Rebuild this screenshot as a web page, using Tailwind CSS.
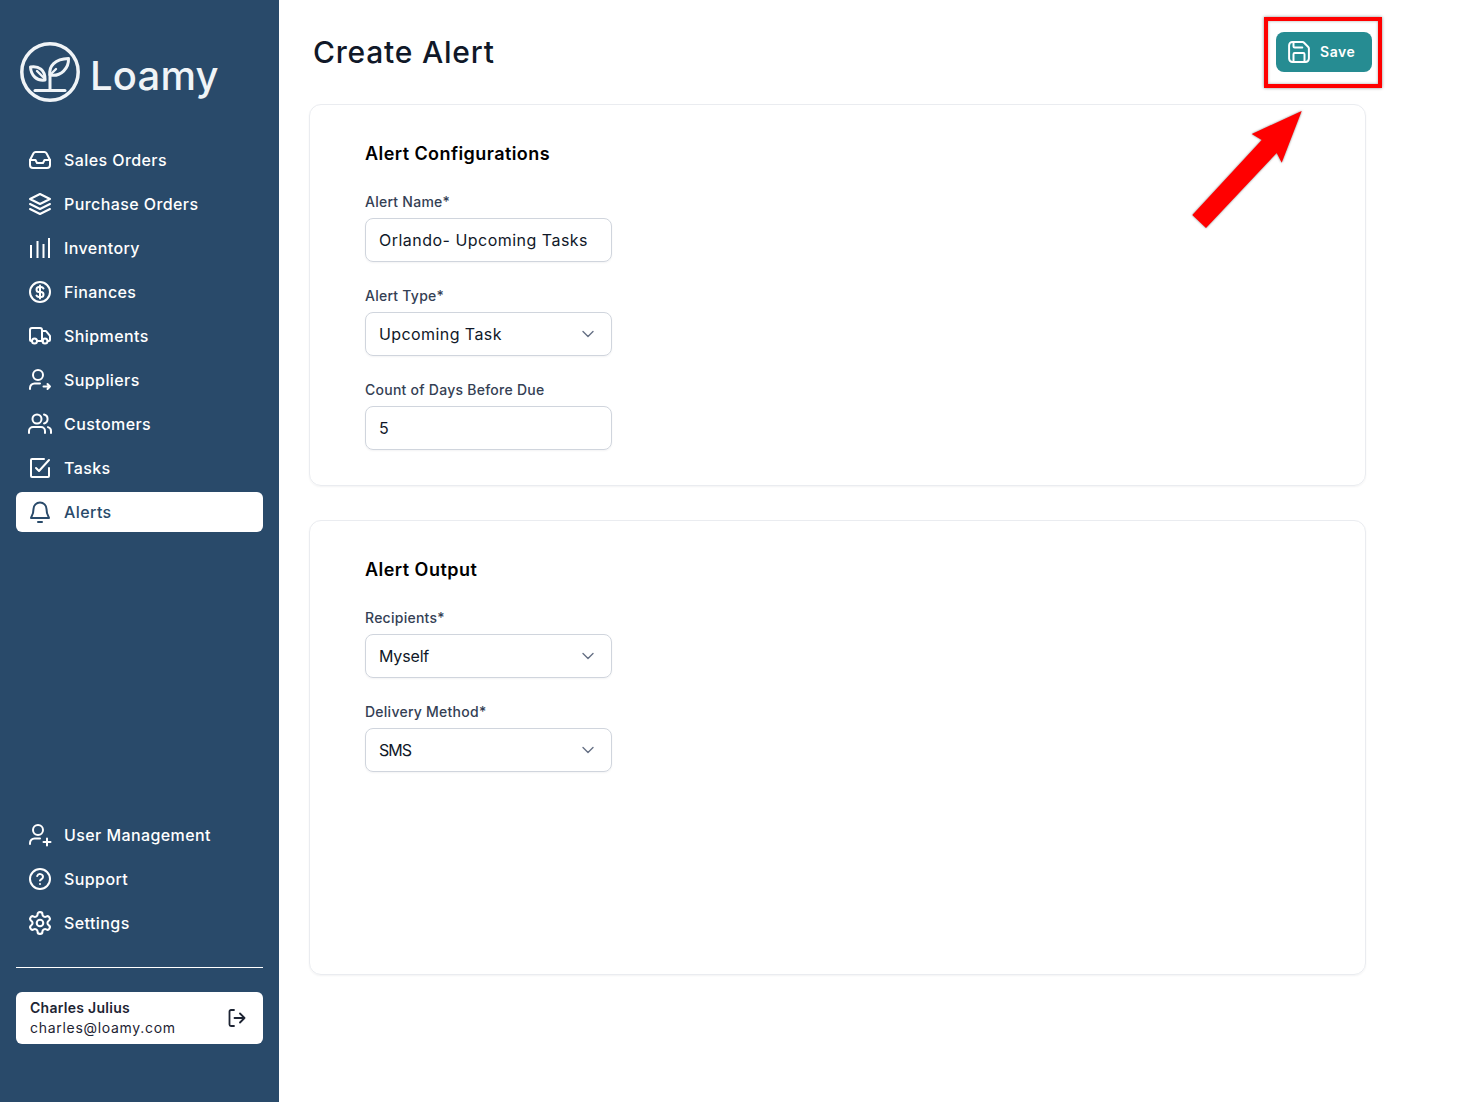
<!DOCTYPE html>
<html lang="en">
<head>
<meta charset="utf-8">
<title>Create Alert</title>
<script src="https://cdn.jsdelivr.net/npm/@tailwindcss/browser@4"></script>
</head>
<body class="bg-white font-['Inter',sans-serif]">
<div class="relative flex h-[1102px] w-[1460px] overflow-hidden">
  <aside class="flex h-full w-[279px] shrink-0 flex-col bg-[#294a6a] px-4 pb-[58px] pt-[42px] text-white">
    <div class="flex h-[60px] items-center gap-[10px] pl-1">
      <svg class="size-[60px] shrink-0" viewBox="0 0 60 60" fill="none" stroke="#f0f4f7" stroke-width="3.500" stroke-linecap="round" stroke-linejoin="round">
        <circle cx="30" cy="30" r="28.200"/>
        <path d="M30 48V32" stroke-width="3"/>
        <path d="M15 48.500h30" stroke-width="3"/>
        <path d="M30 33c-1.500-9 5-16 18.500-16.500C49 26 41 35 30 33z" stroke-width="3"/>
        <path d="M25 38c-8 1-14-4-14.500-13 8-1.500 15 3 14.500 13z" stroke-width="3"/>
        <path d="M17 29l8 8M36 27l-6 6" stroke-width="2.400"/>
      </svg>
      <span class="pt-[7px] text-[40px] font-medium leading-none tracking-[0.005em] text-[#f0f4f7]">Loamy</span>
    </div>
    <nav class="mt-[38px] flex flex-col gap-1 text-base font-medium tracking-[0.026em]">
      <a class="flex h-10 items-center gap-3 px-3">
        <svg class="size-6 shrink-0" viewBox="0 0 24 24" fill="none" stroke="currentColor" stroke-width="2" stroke-linecap="round" stroke-linejoin="round"><path d="M2 12h5.500l1.500 3h6l1.500-3H22"/><path d="M5.500 5.200 2 12v5a3 3 0 0 0 3 3h14a3 3 0 0 0 3-3v-5l-3.500-6.800A2.500 2.500 0 0 0 16.300 4H7.700a2.500 2.500 0 0 0-2.200 1.200z"/></svg>
        Sales Orders</a>
      <a class="flex h-10 items-center gap-3 px-3">
        <svg class="size-6 shrink-0" viewBox="0 0 24 24" fill="none" stroke="currentColor" stroke-width="2" stroke-linecap="round" stroke-linejoin="round"><path d="M2 12l10 5 10-5"/><path d="M2 17l10 5 10-5"/><path d="M2 7l10-5 10 5-10 5z"/></svg>
        Purchase Orders</a>
      <a class="flex h-10 items-center gap-3 px-3">
        <svg class="size-6 shrink-0" viewBox="0 0 24 24" fill="none" stroke="currentColor" stroke-width="2"><path d="M3 9v13M9.500 5v17M15.500 8v14M21 2v20"/></svg>
        Inventory</a>
      <a class="flex h-10 items-center gap-3 px-3">
        <svg class="size-6 shrink-0" viewBox="0 0 24 24" fill="none" stroke="currentColor" stroke-width="2" stroke-linecap="round" stroke-linejoin="round"><circle cx="12" cy="12" r="10"/><path d="M15.500 8.500a3 3 0 0 0-2.500-1.500h-2a2.500 2.500 0 0 0 0 5h2a2.500 2.500 0 0 1 0 5h-2a3 3 0 0 1-2.500-1.500"/><path d="M12 5.500v13"/></svg>
        Finances</a>
      <a class="flex h-10 items-center gap-3 px-3">
        <svg class="size-6 shrink-0" viewBox="0 0 24 24" fill="none" stroke="currentColor" stroke-width="2" stroke-linecap="round" stroke-linejoin="round"><path d="M14 17V6a2 2 0 0 0-2-2H4a2 2 0 0 0-2 2v10a1 1 0 0 0 1 1h1"/><path d="M15 17H9"/><path d="M20 17h1a1 1 0 0 0 1-1v-3.650a1 1 0 0 0-.22-.624l-3.480-4.350A1 1 0 0 0 17.520 7H14"/><circle cx="17" cy="17" r="2.500"/><circle cx="6.500" cy="17" r="2.500"/></svg>
        Shipments</a>
      <a class="flex h-10 items-center gap-3 px-3">
        <svg class="size-6 shrink-0" viewBox="0 0 24 24" fill="none" stroke="currentColor" stroke-width="2" stroke-linecap="round" stroke-linejoin="round"><circle cx="10" cy="7" r="5"/><path d="M2 21v-1a4.500 4.500 0 0 1 4.500-4.500H12"/><path d="M15.500 18.500H22m-2.500-2.500 2.500 2.500-2.500 2.500"/></svg>
        Suppliers</a>
      <a class="flex h-10 items-center gap-3 px-3">
        <svg class="size-6 shrink-0" viewBox="0 0 24 24" fill="none" stroke="currentColor" stroke-width="2" stroke-linecap="round" stroke-linejoin="round"><path d="M17 21v-2a4 4 0 0 0-4-4H5a4 4 0 0 0-4 4v2"/><circle cx="9" cy="7" r="4.500"/><path d="M23 21v-2a4 4 0 0 0-3-3.870"/><path d="M16 2.600a4.500 4.500 0 0 1 0 8.800"/></svg>
        Customers</a>
      <a class="flex h-10 items-center gap-3 px-3">
        <svg class="size-6 shrink-0" viewBox="0 0 24 24" fill="none" stroke="currentColor" stroke-width="2" stroke-linecap="round" stroke-linejoin="round"><path d="M21 12v8a1 1 0 0 1-1 1H4a1 1 0 0 1-1-1V4a1 1 0 0 1 1-1h12"/><path d="M8 12l3 3 10-11"/></svg>
        Tasks</a>
      <a class="flex h-10 items-center gap-3 rounded-md bg-white px-3 text-[#294a6a]">
        <svg class="size-6 shrink-0" viewBox="0 0 24 24" fill="none" stroke="currentColor" stroke-width="2" stroke-linecap="round" stroke-linejoin="round"><path d="M5.500 9a6.500 6.500 0 0 1 13 0c0 6 2.500 8 2.500 9H3c0-1 2.500-3 2.500-9z"/><path d="M10 22h4"/></svg>
        Alerts</a>
    </nav>
    <nav class="mt-auto flex flex-col gap-1 text-base font-medium tracking-[0.026em]">
      <a class="flex h-10 items-center gap-3 px-3">
        <svg class="size-6 shrink-0" viewBox="0 0 24 24" fill="none" stroke="currentColor" stroke-width="2" stroke-linecap="round" stroke-linejoin="round"><circle cx="10" cy="7" r="5"/><path d="M2 21v-1a4.500 4.500 0 0 1 4.500-4.500H12"/><path d="M19 15.500v7M15.500 19h7"/></svg>
        User Management</a>
      <a class="flex h-10 items-center gap-3 px-3">
        <svg class="size-6 shrink-0" viewBox="0 0 24 24" fill="none" stroke="currentColor" stroke-width="2" stroke-linecap="round" stroke-linejoin="round"><circle cx="12" cy="12" r="10"/><path d="M9.200 9a3 3 0 0 1 5.800 1c0 2-3 2.800-3 3.500"/><path d="M12 17h.01"/></svg>
        Support</a>
      <a class="flex h-10 items-center gap-3 px-3">
        <svg class="size-6 shrink-0" viewBox="1 1 22 22" fill="none" stroke="currentColor" stroke-width="1.900" stroke-linecap="round" stroke-linejoin="round"><path d="M12.220 2h-.44a2 2 0 0 0-2 2v.18a2 2 0 0 1-1 1.730l-.43.25a2 2 0 0 1-2 0l-.15-.08a2 2 0 0 0-2.730.73l-.22.380a2 2 0 0 0 .73 2.730l.15.1a2 2 0 0 1 1 1.720v.51a2 2 0 0 1-1 1.740l-.15.09a2 2 0 0 0-.73 2.730l.22.380a2 2 0 0 0 2.730.73l.15-.08a2 2 0 0 1 2 0l.43.25a2 2 0 0 1 1 1.730V20a2 2 0 0 0 2 2h.44a2 2 0 0 0 2-2v-.18a2 2 0 0 1 1-1.730l.43-.25a2 2 0 0 1 2 0l.15.08a2 2 0 0 0 2.730-.73l.22-.390a2 2 0 0 0-.73-2.730l-.15-.08a2 2 0 0 1-1-1.740v-.5a2 2 0 0 1 1-1.740l.15-.09a2 2 0 0 0 .73-2.730l-.22-.380a2 2 0 0 0-2.730-.73l-.15.08a2 2 0 0 1-2 0l-.43-.25a2 2 0 0 1-1-1.730V4a2 2 0 0 0-2-2z"/><circle cx="12" cy="12" r="3"/></svg>
        Settings</a>
    </nav>
    <div class="mt-6 border-t border-white pt-6">
      <div class="flex h-[52px] items-center justify-between rounded-md bg-white pl-[14px] pr-4 text-[#1d2433]">
        <div class="text-sm leading-5">
          <div class="font-semibold tracking-[0.02em]">Charles Julius</div>
          <div class="tracking-[0.05em]">charles@loamy.com</div>
        </div>
        <svg class="size-5 shrink-0" viewBox="0 0 20 20" fill="none" stroke="currentColor" stroke-width="1.800" stroke-linecap="round" stroke-linejoin="round"><path d="M7 2H4a1.500 1.500 0 0 0-1.500 1.500v13A1.500 1.500 0 0 0 4 18h3"/><path d="M7.500 10h10M13 5.500l4.500 4.500-4.500 4.500"/></svg>
      </div>
    </div>
  </aside>

  <main class="flex w-[1093px] flex-col pl-[30px] pt-8">
    <header class="flex h-10 items-center justify-between pl-1">
      <h1 class="text-[30px] font-medium leading-10 tracking-[0.026em] text-[#101828]">Create Alert</h1>
      <button class="flex h-10 w-24 items-center gap-[10px] rounded-lg bg-[#268c92] pl-[12px] text-sm font-semibold tracking-[0.04em] text-white">
        <svg class="size-[22px] shrink-0" viewBox="2 2 20 20" fill="none" stroke="currentColor" stroke-width="1.800" stroke-linecap="round" stroke-linejoin="round"><path d="M15.200 3a2 2 0 0 1 1.400.6l3.800 3.800a2 2 0 0 1 .6 1.400V18a3 3 0 0 1-3 3H6a3 3 0 0 1-3-3V6a3 3 0 0 1 3-3z"/><path d="M17 21v-7a1 1 0 0 0-1-1H8a1 1 0 0 0-1 1v7"/><path d="M7 3v4a1 1 0 0 0 1 1h7"/></svg>
        Save
      </button>
    </header>

    <section class="mt-8 w-[1057px] rounded-xl border border-[#eaecf0] px-[55px] pb-[35px] pt-[35px] shadow-[0_1px_2px_rgba(16,24,40,0.05)]">
      <h2 class="text-lg font-semibold leading-7 tracking-[0.024em] text-black">Alert Configurations</h2>
      <div class="mt-6 flex flex-col gap-6">
        <div>
          <label class="mb-1.5 block text-sm font-medium leading-5 tracking-[0.018em] text-[#344054]">Alert Name*</label>
          <div class="flex h-11 w-[247px] items-center rounded-lg border border-[#d0d5dd] px-[13px] text-base tracking-[0.03em] text-[#101828] shadow-[0_1px_2px_rgba(16,24,40,0.05)]">Orlando- Upcoming Tasks</div>
        </div>
        <div>
          <label class="mb-1.5 block text-sm font-medium leading-5 tracking-[0.018em] text-[#344054]">Alert Type*</label>
          <div class="flex h-11 w-[247px] items-center justify-between rounded-lg border border-[#d0d5dd] pl-[13px] pr-[15px] text-base tracking-[0.026em] text-[#101828] shadow-[0_1px_2px_rgba(16,24,40,0.05)]">Upcoming Task
            <svg class="size-4 shrink-0 text-[#667085]" viewBox="0 0 16 16" fill="none" stroke="currentColor" stroke-width="1.400" stroke-linecap="round" stroke-linejoin="round"><path d="M3 5.500l5 5 5-5"/></svg>
          </div>
        </div>
        <div>
          <label class="mb-1.5 block text-sm font-medium leading-5 tracking-[0.018em] text-[#344054]">Count of Days Before Due</label>
          <div class="flex h-11 w-[247px] items-center rounded-lg border border-[#d0d5dd] px-[13px] text-base text-[#101828] shadow-[0_1px_2px_rgba(16,24,40,0.05)]">5</div>
        </div>
      </div>
    </section>

    <section class="mt-[34px] h-[455px] w-[1057px] rounded-xl border border-[#eaecf0] px-[55px] pt-[35px] shadow-[0_1px_2px_rgba(16,24,40,0.05)]">
      <h2 class="text-lg font-semibold leading-7 tracking-[0.026em] text-black">Alert Output</h2>
      <div class="mt-6 flex flex-col gap-6">
        <div>
          <label class="mb-1.5 block text-sm font-medium leading-5 tracking-[0.018em] text-[#344054]">Recipients*</label>
          <div class="flex h-11 w-[247px] items-center justify-between rounded-lg border border-[#d0d5dd] pl-[13px] pr-[15px] text-base tracking-[-0.01em] text-[#101828] shadow-[0_1px_2px_rgba(16,24,40,0.05)]">Myself
            <svg class="size-4 shrink-0 text-[#667085]" viewBox="0 0 16 16" fill="none" stroke="currentColor" stroke-width="1.400" stroke-linecap="round" stroke-linejoin="round"><path d="M3 5.500l5 5 5-5"/></svg>
          </div>
        </div>
        <div>
          <label class="mb-1.5 block text-sm font-medium leading-5 tracking-[0.018em] text-[#344054]">Delivery Method*</label>
          <div class="flex h-11 w-[247px] items-center justify-between rounded-lg border border-[#d0d5dd] pl-[13px] pr-[15px] text-base tracking-[-0.06em] text-[#101828] shadow-[0_1px_2px_rgba(16,24,40,0.05)]">SMS
            <svg class="size-4 shrink-0 text-[#667085]" viewBox="0 0 16 16" fill="none" stroke="currentColor" stroke-width="1.400" stroke-linecap="round" stroke-linejoin="round"><path d="M3 5.500l5 5 5-5"/></svg>
          </div>
        </div>
      </div>
    </section>
  </main>

  <div class="absolute left-[1264px] top-[17px] h-[71px] w-[118px] border-4 border-[#ff0000] shadow-[0_0_3px_rgba(0,0,0,0.45),inset_0_0_3px_rgba(0,0,0,0.35)]"></div>
  <svg class="absolute left-[1185px] top-[105px] h-[130px] w-[122px] drop-shadow-[0_0_1px_rgba(0,0,0,0.5)]" viewBox="1185 105 122 130">
    <polygon fill="#ff0000" points="1301.7,111 1251.700,134 1261.700,140 1192.300,215 1206,228 1276.700,153 1281.700,162.700"/>
  </svg>
</div>
</body>
</html>
